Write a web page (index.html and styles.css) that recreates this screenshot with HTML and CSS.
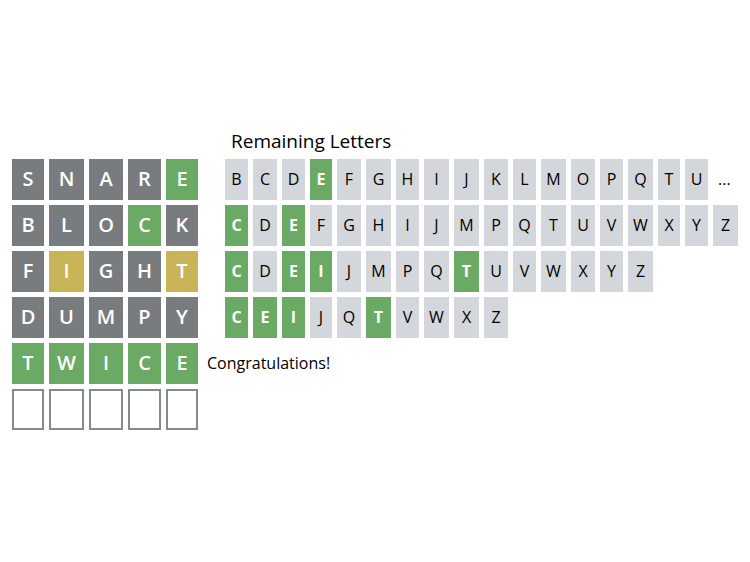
FILE: index.html
```html
<!DOCTYPE html>
<html lang="en">
<head>
<meta charset="utf-8">
<title>Word game</title>
<link rel="stylesheet" href="styles.css">
</head>
<body>
<main class="game">
  <section class="board">
    <div class="guess"><b class="miss">S</b><b class="miss">N</b><b class="miss">A</b><b class="miss">R</b><b class="hit">E</b></div>
    <div class="guess"><b class="miss">B</b><b class="miss">L</b><b class="miss">O</b><b class="hit">C</b><b class="miss">K</b></div>
    <div class="guess"><b class="miss">F</b><b class="near">I</b><b class="miss">G</b><b class="miss">H</b><b class="near">T</b></div>
    <div class="guess"><b class="miss">D</b><b class="miss">U</b><b class="miss">M</b><b class="miss">P</b><b class="miss">Y</b></div>
    <div class="guess"><b class="hit">T</b><b class="hit">W</b><b class="hit">I</b><b class="hit">C</b><b class="hit">E</b></div>
    <div class="guess"><b class="empty"></b><b class="empty"></b><b class="empty"></b><b class="empty"></b><b class="empty"></b></div>
  </section>
  <section class="remaining">
    <h1 class="title">Remaining Letters</h1>
    <div class="letters"><span>B</span><span>C</span><span>D</span><b class="hit">E</b><span>F</span><span>G</span><span>H</span><span>I</span><span>J</span><span>K</span><span>L</span><span>M</span><span>O</span><span>P</span><span>Q</span><span>T</span><span>U</span><i class="more">...</i></div>
    <div class="letters"><b class="hit">C</b><span>D</span><b class="hit">E</b><span>F</span><span>G</span><span>H</span><span>I</span><span>J</span><span>M</span><span>P</span><span>Q</span><span>T</span><span>U</span><span>V</span><span>W</span><span>X</span><span>Y</span><span>Z</span></div>
    <div class="letters"><b class="hit">C</b><span>D</span><b class="hit">E</b><b class="hit">I</b><span>J</span><span>M</span><span>P</span><span>Q</span><b class="hit">T</b><span>U</span><span>V</span><span>W</span><span>X</span><span>Y</span><span>Z</span></div>
    <div class="letters"><b class="hit">C</b><b class="hit">E</b><b class="hit">I</b><span>J</span><span>Q</span><b class="hit">T</b><span>V</span><span>W</span><span>X</span><span>Z</span></div>
    <p class="message">Congratulations!</p>
  </section>
</main>
</body>
</html>
```
FILE: styles.css
```css
body {
  margin: 0;
  background: #fff;
  color: #000;
  font: 16px/24px "Open Sans", sans-serif;
}

.game {
  display: flex;
  align-items: flex-end;
  gap: 9px;
  padding: 123px 12px 0;
}

.board,
.remaining {
  display: grid;
  gap: 5px;
}

.remaining {
  grid-template-rows: 31px repeat(6, 41px);
}

.board {
  grid-auto-rows: 41px;
}

.guess,
.letters {
  display: grid;
  gap: 5px;
}

.guess {
  grid-template-columns: 32px 35px 34px 33px 32px;
  font-size: 20px;
}

.letters {
  grid-template-columns: 23px 24px 23px 22px 24px 25px 23px 25px 25px 24px 23px 25px 24px 23px 25px 22px 23px 25px;
  padding-left: 18px;
  font-weight: 500;
}

.guess > *,
.letters > * {
  display: grid;
  place-items: center;
  box-sizing: border-box;
  padding-bottom: 1px;
}

.guess > b,
.letters > b {
  color: #fff;
}

.guess > b {
  font-weight: 600;
}

.letters > b {
  font-weight: 700;
}

.letters > span {
  background: #d3d6da;
}

.guess > .miss {
  background: #787c7e;
}

.guess > .near {
  background: #c9b458;
}

.guess > .hit,
.letters > .hit {
  background: #6aaa64;
}

.guess > .empty {
  border: 2px solid #878a8c;
}

.letters > .more {
  justify-items: start;
  padding-left: 5px;
  font-style: normal;
}

.title {
  margin: 0;
  padding-left: 24px;
  font-size: 19px;
  font-weight: 500;
  line-height: 36px;
}

.message {
  margin: 0;
  line-height: 41px;
}
```
